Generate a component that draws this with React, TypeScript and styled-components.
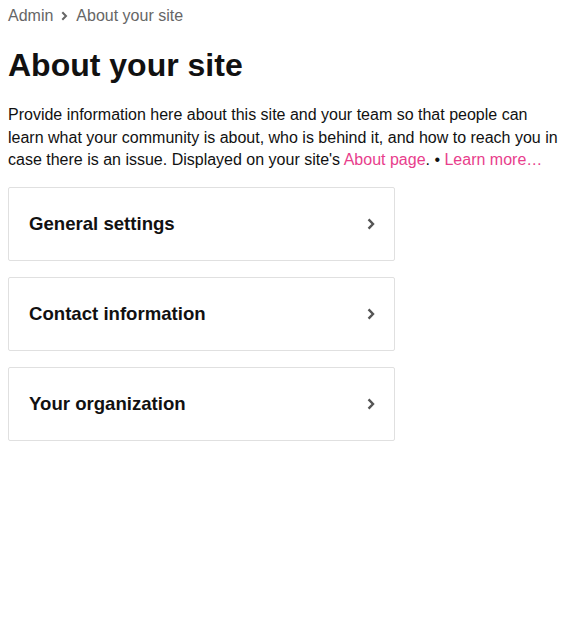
import React from "react";
import styled, { createGlobalStyle } from "styled-components";

const Global = createGlobalStyle`
  body {
    margin: 0;
    padding: 8px;
    font-family: "Liberation Sans", Arial, sans-serif;
    color: #111;
    background: #fff;
  }
`;

const Breadcrumb = styled.nav`
  display: flex;
  align-items: center;
  gap: 8px;
  font-size: 16px;
  line-height: 16px;
  color: #666;
`;

const Crumb = styled.span`
  color: #666;
`;

const Title = styled.h1`
  font-size: 32px;
  font-weight: bold;
  margin: 23px 0 21px;
  line-height: 36px;
  color: #111;
`;

const Intro = styled.p`
  font-size: 16px;
  line-height: 22.5px;
  margin: 0 0 15px;
  color: #111;
`;

const Link = styled.a`
  color: #e83e8c;
  text-decoration: none;
`;

const List = styled.div`
  display: flex;
  flex-direction: column;
  gap: 16px;
  width: 387px;
`;

const Card = styled.div`
  display: flex;
  align-items: center;
  justify-content: space-between;
  height: 74px;
  box-sizing: border-box;
  border: 1px solid #e0e0e0;
  border-radius: 2px;
  padding: 0 19px 0 20px;
`;

const CardTitle = styled.span`
  font-size: 18.6px;
  font-weight: bold;
  color: #111;
  padding-top: 1px;
`;

const Chevron = ({ size = 10, color = "#555" }: { size?: number; color?: string }) => (
  <svg width={size * 0.7} height={size} viewBox="0 0 7 10" fill="none">
    <path d="M1.3 1.2 L5 5 L1.3 8.8" stroke={color} strokeWidth="2" strokeLinecap="butt" />
  </svg>
);

const sections = ["General settings", "Contact information", "Your organization"];

export default function App() {
  return (
    <>
      <Global />
      <Breadcrumb>
        <Crumb>Admin</Crumb>
        <Chevron size={10} color="#666" />
        <Crumb>About your site</Crumb>
      </Breadcrumb>
      <Title>About your site</Title>
      <Intro>
        Provide information here about this site and your team so that people can learn what your
        community is about, who is behind it, and how to reach you in case there is an issue.
        Displayed on your site's <Link href="#">About page</Link>. • <Link href="#">Learn more…</Link>
      </Intro>
      <List>
        {sections.map((s) => (
          <Card key={s}>
            <CardTitle>{s}</CardTitle>
            <Chevron size={12} />
          </Card>
        ))}
      </List>
    </>
  );
}
